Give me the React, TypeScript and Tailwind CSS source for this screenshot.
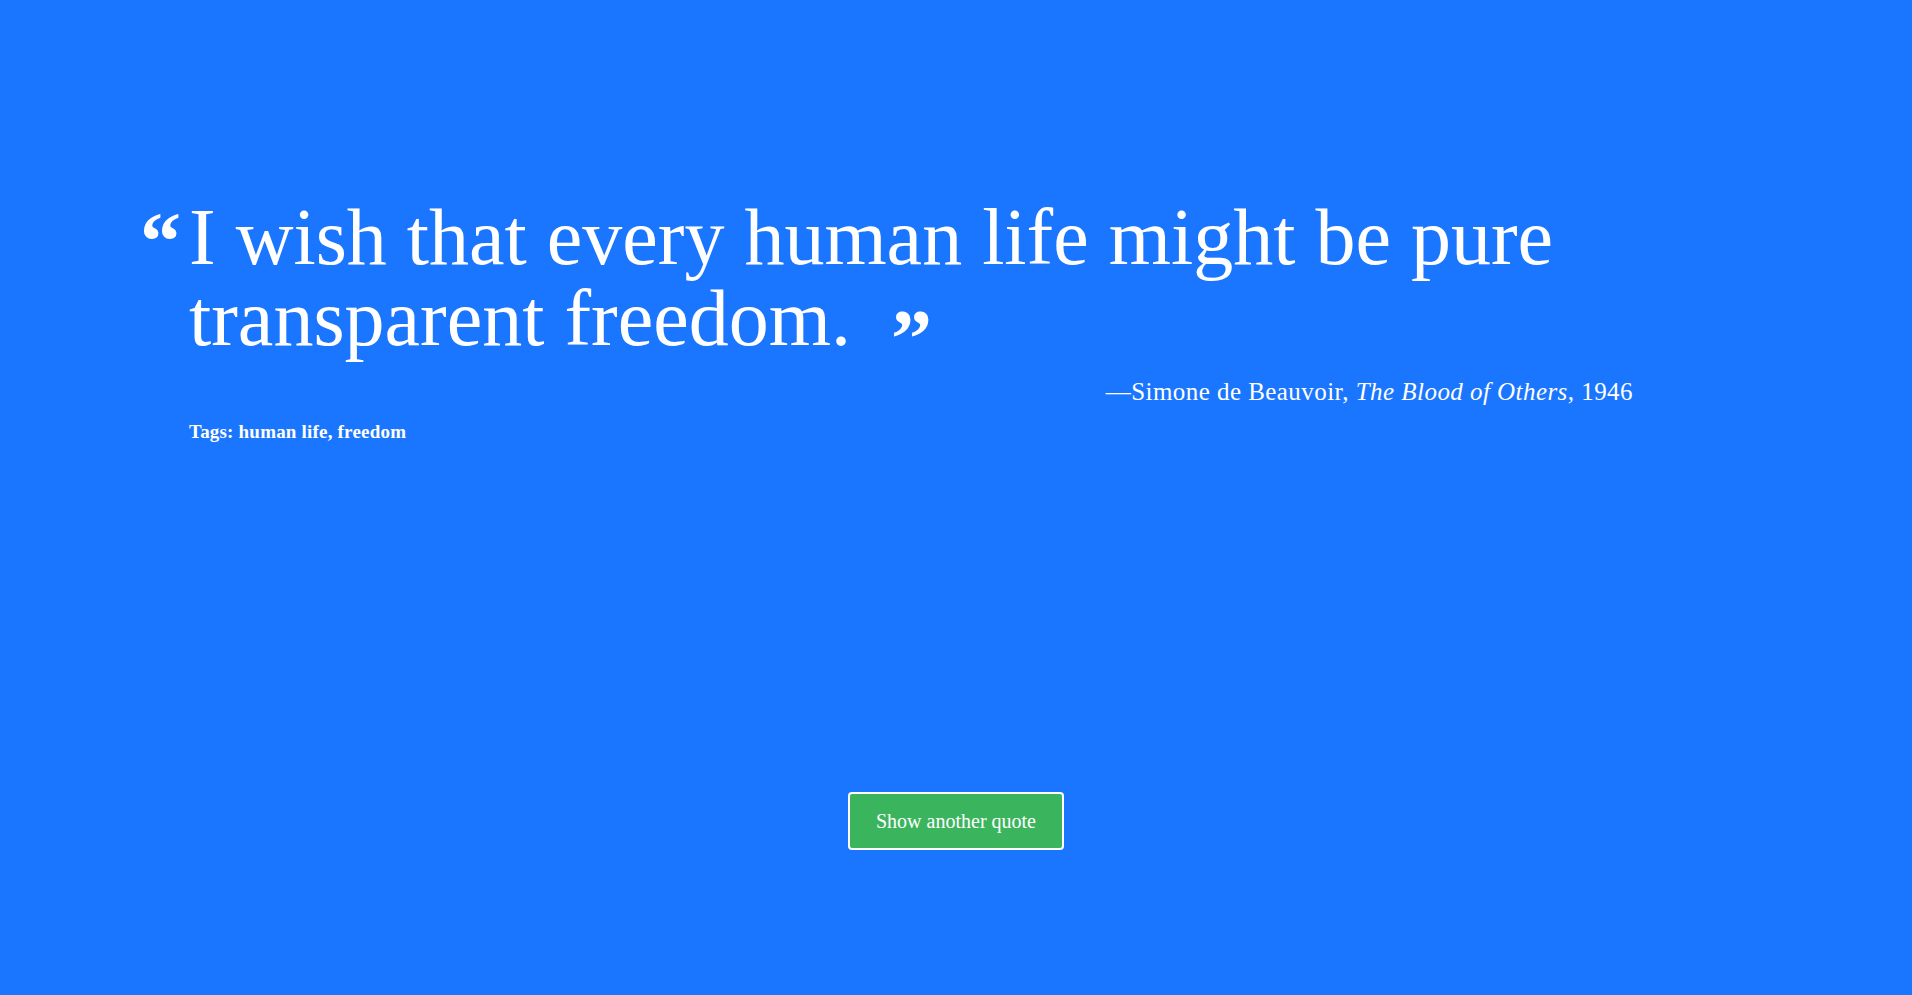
import React from "react";

export default function App() {
  return (
    <div className="min-h-screen w-full bg-[#1b76ff] text-white" style={{ fontFamily: '"Liberation Serif", serif' }}>
      <div className="flex flex-col pt-[197px]">
        <div className="flex pl-[140px]">
          <div className="w-[35px] shrink-0 font-bold text-[82px] leading-[60px] pt-[15px]">“</div>
          <div className="ml-[14px] w-[1444px] flex flex-col">
            <p className="text-[80px] leading-[81px] font-normal">
              I wish that every human life might be pure transparent freedom.
              <span className="relative top-[12px] ml-[40px] inline-block font-bold text-[82px] leading-[40px] align-middle">”</span>
            </p>
            <p className="mt-[16px] self-end text-[25px] leading-[33px] tracking-[0.45px]">
              —Simone de Beauvoir, <i>The Blood of Others</i>, 1946
            </p>
            <p className="mt-[10px] text-[19px] leading-[27px] font-bold tracking-[0.2px]">Tags: human life, freedom</p>
          </div>
        </div>
        <div className="mt-[347px] flex justify-center">
          <button className="h-[58px] w-[216px] rounded-[4px] border-2 border-white bg-[#3ab55e] text-[20px] text-white">
            Show another quote
          </button>
        </div>
      </div>
    </div>
  );
}
